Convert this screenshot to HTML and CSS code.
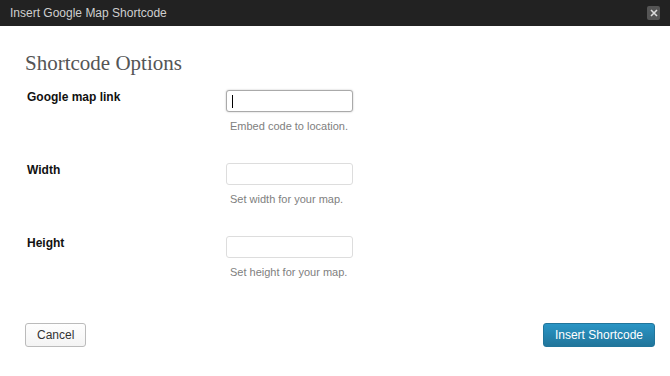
FILE: index.html
```html
<!DOCTYPE html>
<html lang="en">
<head>
    <meta charset="UTF-8">
    <title>Insert Google Map Shortcode</title>
    <link rel="stylesheet" href="styles.css">
</head>
<body>
    <div class="titlebar">
        <span class="title">Insert Google Map Shortcode</span>
        <span class="close">
            <svg width="8" height="8" viewBox="0 0 8 8"><path d="M1 1L7 7M7 1L1 7" stroke="#ddd" stroke-width="1.6"/></svg>
        </span>
    </div>

    <div class="content">
        <h3>Shortcode Options</h3>

        <div class="row">
            <label for="link">Google map link</label>
            <div class="field">
                <span class="input-wrap">
                    <input type="text" id="link" class="focused">
                    <span class="caret"></span>
                </span>
                <p class="desc">Embed code to location.</p>
            </div>
        </div>

        <div class="row">
            <label for="width">Width</label>
            <div class="field">
                <input type="text" id="width">
                <p class="desc">Set width for your map.</p>
            </div>
        </div>

        <div class="row">
            <label for="height">Height</label>
            <div class="field">
                <input type="text" id="height">
                <p class="desc">Set height for your map.</p>
            </div>
        </div>
    </div>

    <div class="footer">
        <button class="btn">Cancel</button>
        <button class="btn primary">Insert Shortcode</button>
    </div>
</body>
</html>
```

FILE: styles.css
```css
body {
    margin: 0;
    font-family: "Liberation Sans", Arial, sans-serif;
    font-size: 12px;
    color: #333;
    background-color: #fff;
}
.titlebar {
    height: 26px;
    background-color: #222;
    display: flex;
    align-items: center;
    justify-content: space-between;
    padding: 0 10px 0 10px;
}
.title {
    color: #cfcfcf;
    font-size: 12px;
}
.close {
    width: 13px;
    height: 14px;
    background-color: #555;
    border-radius: 2px;
    display: flex;
    align-items: center;
    justify-content: center;
}
.content {
    padding: 25px 25px 0 25px;
}
h3 {
    font-family: "Liberation Serif", Georgia, serif;
    font-weight: normal;
    font-size: 21px;
    color: #555;
    margin: 0 0 15px 0;
    line-height: 24px;
}
.row {
    display: flex;
    height: 73px;
}
.row label {
    width: 199px;
    padding: 0 0 0 2px;
    font-weight: bold;
    color: #111;
}
.field input {
    width: 127px;
    height: 22px;
    box-sizing: border-box;
    border: 1px solid #ddd;
    border-radius: 3px;
    margin: 0;
    padding: 2px 4px;
    font-family: inherit;
    font-size: 12px;
}
.field input.focused {
    border-color: #aaa;
    box-shadow: 0 0 2px rgba(0, 0, 0, 0.25);
}
.input-wrap {
    position: relative;
    display: inline-block;
}
.caret {
    position: absolute;
    left: 6px;
    top: 5px;
    width: 1px;
    height: 13px;
    background-color: #000;
}
.desc {
    margin: 8px 0 0 4px;
    font-size: 11px;
    color: #808080;
}
.footer {
    display: flex;
    justify-content: space-between;
    padding: 14px 15px 0 25px;
}
.btn {
    height: 24px;
    padding: 0 11px;
    font-family: inherit;
    font-size: 12px;
    color: #333;
    border: 1px solid #bbb;
    border-radius: 3px;
    background: linear-gradient(#fefefe, #f4f4f4);
}
.btn.primary {
    color: #fff;
    border-color: #21759b;
    background: linear-gradient(#2a95c5, #21759b);
}
```
